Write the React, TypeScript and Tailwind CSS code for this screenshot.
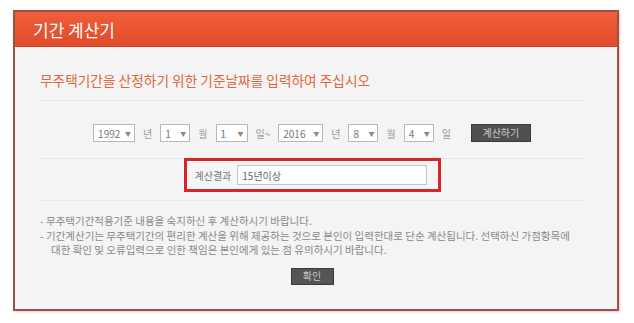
const font = { fontFamily: '"Noto Sans CJK KR", "Noto Sans", sans-serif' };

const Select = ({ value, w }: { value: string; w: string }) => (
  <div
    className={`${w} h-[18px] flex items-center justify-between pl-[4px] pr-[3px] bg-white border border-[#b8b8b8] text-[10px] text-[#777]`}
  >
    <span>{value}</span>
    <span className="text-[6px] text-[#888]">▼</span>
  </div>
);

const Unit = ({ children }: { children: string }) => (
  <span className="text-[10px] text-[#999]">{children}</span>
);

export default function App() {
  return (
    <div className="w-[634px] h-[323px] bg-white pt-[10px] pl-[13px]" style={font}>
      <div className="w-[606px] h-[301px] border-2 border-[#9c5048] bg-[#f4f4f4] flex flex-col shadow-[1px_1px_2px_rgba(200,120,100,0.4)]">
        {/* Header */}
        <div className="h-[35px] bg-gradient-to-b from-[#ef5f3b] to-[#df4a2b] border-b border-[#c8452b] flex items-center pl-[18px]">
          <h1 className="text-white text-[17px] leading-none">기간 계산기</h1>
        </div>

        <div className="pl-[25px] pr-[33px] flex flex-col">
          <p className="mt-[23px] text-[13.7px] leading-[20px] text-[#e0673e] pb-[10px] border-b border-[#e6e6e6]">
            무주택기간을 산정하기 위한 기준날짜를 입력하여 주십시오
          </p>

          {/* Date row */}
          <div className="mt-[23px] flex items-center justify-center gap-[8px]">
            <Select value="1992" w="w-[42px]" />
            <Unit>년</Unit>
            <Select value="1" w="w-[30px]" />
            <Unit>월</Unit>
            <Select value="1" w="w-[32px]" />
            <Unit>일~</Unit>
            <Select value="2016" w="w-[45px]" />
            <Unit>년</Unit>
            <Select value="8" w="w-[30px]" />
            <Unit>월</Unit>
            <Select value="4" w="w-[30px]" />
            <Unit>일</Unit>
            <button className="ml-[12px] w-[60px] h-[18px] bg-[#505050] border border-[#3a3a3a] text-[10px] text-[#ccc] leading-none">
              계산하기
            </button>
          </div>

          {/* Result */}
          <div className="mt-[16px] border-t border-[#e6e6e6] flex justify-center">
            <div className="-mt-px w-[257px] h-[34px] border-[3px] border-[#d5242a] bg-[#f6f6f6] flex items-center pl-[8px] gap-[6px]">
              <span className="text-[10px] text-[#777]">계산결과</span>
              <div className="w-[190px] h-[20px] bg-white border border-[#c4c4c4] flex items-center px-[4px] text-[10px] text-[#666]">
                15년이상
              </div>
            </div>
          </div>

          {/* Notes */}
          <div className="mt-[8px] border-t border-[#e6e6e6] pt-[13px] text-[10.5px] leading-[14.5px] text-[#888]">
            <p>- 무주택기간적용기준 내용을 숙지하신 후 계산하시기 바랍니다.</p>
            <p>
              - 기간계산기는 무주택기간의 편리한 계산을 위해 제공하는 것으로 본인이 입력한대로 단순 계산됩니다. 선택하신 가점항목에
            </p>
            <p className="pl-[11px]">대한 확인 및 오류입력으로 인한 책임은 본인에게 있는 점 유의하시기 바랍니다.</p>
          </div>

          <div className="mt-[10px] flex justify-center">
            <button className="w-[43px] h-[17px] bg-[#555] border border-[#3a3a3a] text-[10px] text-[#ccc] leading-none">
              확인
            </button>
          </div>
        </div>
      </div>
    </div>
  );
}
